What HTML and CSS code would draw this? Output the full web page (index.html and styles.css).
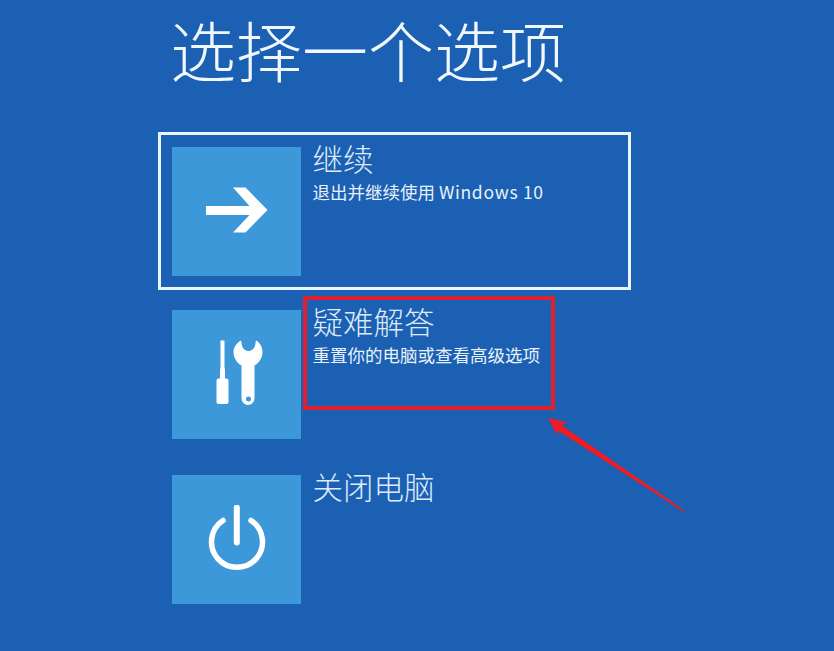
FILE: index.html
```html
<!DOCTYPE html>
<html lang="zh-CN">
<head>
<meta charset="utf-8">
<title>选择一个选项</title>
<link rel="stylesheet" href="styles.css">
</head>
<body>
<main class="screen">
  <h1 class="title">选择一个选项</h1>
  <ul class="options">
    <li class="option selected">
      <div class="tile">
        <svg class="icon" viewBox="204 176.500 65 70"><path d="M206 205.500H249.500L233 187H245.500L267.500 209.500 245.500 232H233L249.500 214.500H206z" fill="#fff"/></svg>
      </div>
      <div class="text">
        <div class="name">继续</div>
        <div class="desc">退出并继续使用 <span class="latin">Windows 10</span></div>
      </div>
    </li>
    <li class="option">
      <div class="tile">
        <svg class="icon" viewBox="204 340 65 70">
          <path d="M220.500 340.500h4v27l.5 2v9h1.500a2 2 0 0 1 2 2V402a2 2 0 0 1-2 2h-8a2 2 0 0 1-2-2v-21.500a2 2 0 0 1 2-2h1.500v-9l.5-2z" fill="#fff"/>
          <path fill-rule="evenodd" d="M241 340.500l1 5c.6 3 3.500 5.500 6.500 5.500s5.900-2.500 6.500-5.500l1-5c4 2 6.500 6.500 6.500 11.500 0 6-3.500 11-8 13.500V398.500a6.500 6.500 0 0 1-13 0V365.500c-4.500-2.500-8-7.500-8-13.500 0-5 3.500-9.500 7.500-11.500zM248.500 396.500a2.500 2.500 0 1 0 0 5 2.500 2.500 0 0 0 0-5z" fill="#fff"/>
        </svg>
      </div>
      <div class="text">
        <div class="name">疑难解答</div>
        <div class="desc">重置你的电脑或查看高级选项</div>
      </div>
    </li>
    <li class="option">
      <div class="tile">
        <svg class="icon" viewBox="204 504.500 65 70">
          <path d="M236.800 507v35" stroke="#fff" stroke-width="6" stroke-linecap="round" fill="none"/>
          <path d="M223 520A25.500 25.500 0 1 0 251 520" stroke="#fff" stroke-width="5.500" stroke-linecap="round" fill="none"/>
        </svg>
      </div>
      <div class="text">
        <div class="name">关闭电脑</div>
      </div>
    </li>
  </ul>
  <div class="highlight"></div>
  <svg class="arrow" viewBox="545 415 142 100"><path d="M548 418 567 422 562 425.500 684.500 510.500 684 512 558.500 431 557 435z" fill="#ee1c25"/></svg>
</main>
</body>
</html>
```
FILE: styles.css
```css
html, body {
  margin: 0;
  padding: 0;
}

body {
  background: #1b60b3;
}

.screen {
  position: relative;
  width: 834px;
  height: 651px;
  overflow: hidden;
  padding: 8px 0 0 158px;
  box-sizing: border-box;
  font-family: "Noto Sans CJK SC", "Noto Sans", sans-serif;
  color: #fff;
}

.title {
  margin: 0 0 25px 12px;
  height: 99px;
  font-size: 66px;
  line-height: 80px;
  font-weight: 300;
  color: #f0f7fd;
  white-space: nowrap;
}

.options {
  list-style: none;
  margin: 0;
  padding: 0;
  display: flex;
  flex-direction: column;
  gap: 7px;
}

.option {
  width: 473px;
  height: 158px;
  box-sizing: border-box;
  border: 3px solid transparent;
  padding: 12px 11px;
  display: flex;
  gap: 11.500px;
}

.selected {
  border-color: #e9f4fb;
  margin-bottom: -2px;
}

.tile {
  flex: none;
  width: 129px;
  height: 129px;
  background: #3d98d9;
  display: flex;
  align-items: center;
  justify-content: center;
}

.icon {
  width: 65px;
  height: 70px;
}

.text {
  margin-top: -7px;
}

.name {
  font-size: 30.500px;
  line-height: 36px;
  font-weight: 300;
  color: #dcebf7;
  white-space: nowrap;
}

.desc {
  margin-top: 5px;
  font-size: 17.500px;
  line-height: 22px;
  color: #e8f2fa;
  white-space: nowrap;
}

.latin {
  letter-spacing: 0.700px;
}

.highlight {
  position: absolute;
  left: 303px;
  top: 296px;
  width: 252px;
  height: 114px;
  box-sizing: border-box;
  border: 4px solid #e0202e;
}

.arrow {
  position: absolute;
  left: 545px;
  top: 415px;
  width: 142px;
  height: 100px;
}
```
